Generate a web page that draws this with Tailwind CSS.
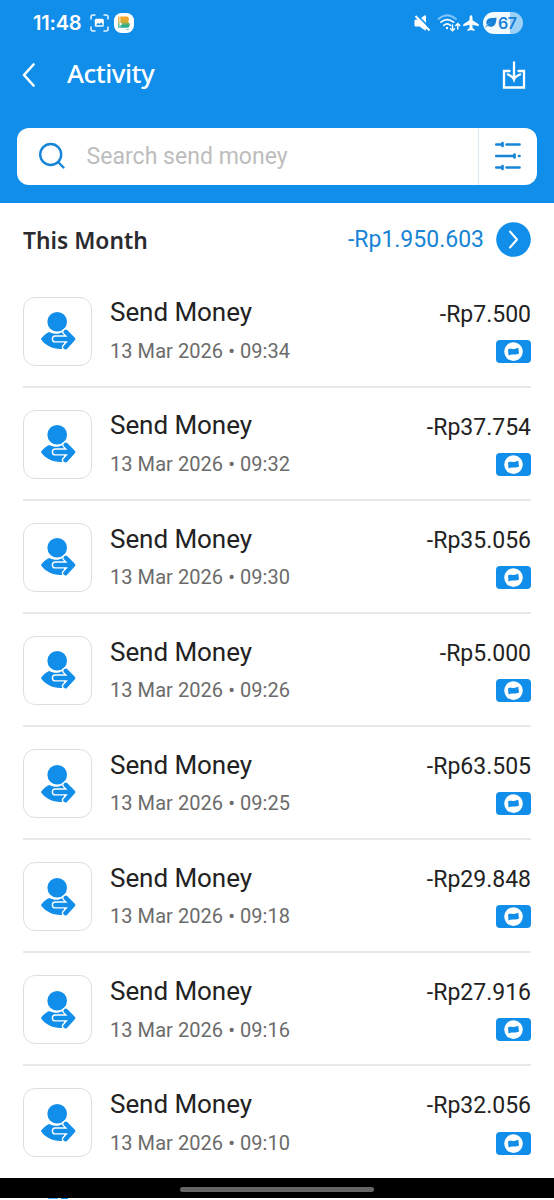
<!DOCTYPE html>
<html lang="en">
<head>
<meta charset="utf-8">
<title>Activity</title>
<script src="https://cdn.jsdelivr.net/npm/@tailwindcss/browser@4"></script>
</head>
<body class="bg-white">
<svg class="hidden">
  <symbol id="send" viewBox="0 0 36 40">
    <circle cx="17.200" cy="10.700" r="9.800" fill="#118eea"/>
    <path d="M.9 28C3.600 24.200 6.500 22 9.300 21C12 22.600 15 23 18 22.700C20.500 22.400 22.500 21 24 20V37.700C14 38.800 5.500 35 .9 28Z" fill="#118eea"/>
    <path d="M15.300 27.900H31M25.800 20.800L33 28L25.500 36.200" fill="none" stroke="#fff" stroke-width="7.200" stroke-linecap="round" stroke-linejoin="round"/>
    <path d="M15.300 27.900H32M25.800 20.800L33 28L25.500 36.200" fill="none" stroke="#118eea" stroke-width="4.500" stroke-linecap="round" stroke-linejoin="round"/>
  </symbol>
  <symbol id="wallet" viewBox="0 0 35 23">
    <rect width="35" height="23" rx="4" fill="#118eea"/>
    <circle cx="17.500" cy="11.600" r="9.300" fill="#fff"/>
    <path d="M12 9.400C14.500 8 17 10 22.300 7.700L23 13.600C19 15.600 16.500 13.500 12.500 15.400Z" fill="#118eea"/>
  </symbol>
</svg>
<div class="relative flex h-[1200px] w-[554px] flex-col overflow-hidden bg-white font-['Roboto',sans-serif]">
  <header class="h-[202.5px] shrink-0 bg-[#118eea] text-white">
    <div class="flex h-[45px] items-center pr-[31px] pl-[33px]">
      <span class="font-['Inter',sans-serif] text-[20px] leading-none font-semibold tracking-[-0.2px]">11:48</span>
      <svg class="ml-[9px] h-[18px] w-[19px]" viewBox="0 0 19 18" fill="none" stroke="#e8f6ff" stroke-width="1.500" stroke-linecap="round">
        <path d="M1 5V3Q1 1 3 1H5M14 1H16Q18 1 18 3V5M18 13V15Q18 17 16 17H14M5 17H3Q1 17 1 15V13"/>
        <rect x="4.800" y="4.800" width="9" height="8" rx="1.500" fill="#fff" stroke="none"/>
        <path d="M6 11.200L8 8.800L9.300 10L11.500 8.200L13 11.200Z" fill="#118eea" stroke="none"/>
      </svg>
      <svg class="ml-[5px] size-5" viewBox="0 0 20 20">
        <defs><linearGradient id="bg" x2="0" y2="1"><stop offset=".15" stop-color="#f6a62b"/><stop offset=".5" stop-color="#c4ae3c"/><stop offset=".75" stop-color="#32af83"/><stop offset="1" stop-color="#2ba8a0"/></linearGradient></defs>
        <rect width="20" height="20" rx="7.500" fill="#fff"/>
        <path d="M4.200 3.500H5.500V15H4.200ZM6.300 3.500H13.500Q16.300 5.500 14 8.700Q17.500 11 14.300 14.800H6.300V12.500L8.500 11L6.300 9.500Z" fill="url(#bg)"/>
        <path d="M12 16.500H15" stroke="#66b7bd" stroke-width=".8"/>
      </svg>
      <div class="ml-auto flex items-center">
        <svg class="h-[18px] w-[17px]" viewBox="0 0 17 18"><path d="M.5 6.500Q.5 5.500 2 5.500H5L10.500 1.500Q12 .8 12 2.500V15.500Q12 17 10.500 16L5.500 12.500H2Q.5 12.500 .5 11.500Z" fill="#fff"/><path d="M2.800 .8L17 15.200" stroke="#118eea" stroke-width="1.800"/><path d="M1.500 2L15.500 16.500" stroke="#fff" stroke-width="1.900"/></svg>
        <svg class="ml-[6px] h-[18px] w-[24px]" viewBox="0 0 24 18" fill="none" stroke="#fff" stroke-width="1.700" stroke-linecap="round">
          <path d="M1.500 5Q10 -2.500 19 5" stroke="#7fc3f8"/><path d="M4 8.200Q10 3 16.500 8.200M6.800 11.300Q10.200 8.500 13.500 11.300"/><circle cx="10" cy="14" r="1.200" fill="#fff" stroke="none"/>
          <path d="M15.500 11V16.500M13.500 14.700L15.500 16.700L17.500 14.700M20.800 15V10M18.800 11.500L20.800 9.500L22.800 11.500" stroke-width="1.400"/>
        </svg>
        <svg class="ml-[2px] size-4" viewBox="0 0 16 16"><path d="M8 0Q9.500 .5 9.500 3V5.300L15.700 9.200V11.200L9.500 9.800V13L11.500 14.400V16L8 15L4.500 16V14.400L6.500 13V9.800L.3 11.200V9.200L6.500 5.300V3Q6.500 .5 8 0Z" fill="#fff"/></svg>
        <div class="ml-[4px] flex h-[22px] w-[40px] items-center rounded-full bg-linear-to-r from-[#f1faff] from-67% to-[#9dd0f8] to-67% pl-[2px] text-[#1680d6]">
          <svg class="h-[11px] w-[12px]" viewBox="0 0 12 11"><path d="M11.500 .5Q11.500 9 7 9.700Q4 10 2.700 8.500L6.500 5L1.500 8Q0 2 6 1Q9 1 11.500 .5Z" fill="#1680d6"/><path d="M.5 10L6.500 5" stroke="#1680d6"/></svg>
          <span class="ml-px font-['Inter',sans-serif] text-[16px] leading-none font-semibold tracking-[-0.5px]">67</span>
        </div>
      </div>
    </div>
    <div class="flex h-[60px] items-center pr-[28px] pl-[22px]">
      <svg class="h-[24px] w-[14px]" viewBox="0 0 14 24" fill="none" stroke="#fff" stroke-width="2.600" stroke-linecap="round" stroke-linejoin="round"><path d="M11.500 1.500L2 12L11.500 22.500"/></svg>
      <h1 class="-mt-[4px] ml-[31px] font-['Noto_Sans',sans-serif] text-[26px] leading-none font-medium tracking-[-0.5px]">Activity</h1>
      <svg class="ml-auto h-[28px] w-[24px]" viewBox="0 0 24 28" fill="none" stroke="#fff" stroke-width="2.300"><path d="M7.500 10H2V26.500H22V10H16.500M12 1.500V18M6 13.500Q11 15.500 12 18.500Q13 15.500 18 13.500" stroke-linecap="round"/></svg>
    </div>
    <div class="mx-[17px] mt-[22.5px] flex h-[57.5px] items-center rounded-xl bg-white">
      <svg class="ml-[21px] size-[28px]" viewBox="0 0 28 28" fill="none" stroke="#1784d6" stroke-width="2.400" stroke-linecap="round"><circle cx="12.700" cy="12.500" r="10.500"/><path d="M20 20L25.500 25.500"/></svg>
      <span class="ml-[20.5px] text-[23px] leading-none tracking-[0.03px] text-[#bdbdbd]">Search send money</span>
      <div class="ml-auto flex h-full w-[59px] items-center justify-center border-l-[1.5px] border-[#dcebf0]">
        <svg class="h-[30px] w-[28px]" viewBox="0 0 28 30" fill="none" stroke="#1784d6" stroke-width="2.700" stroke-linecap="round"><path d="M2.300 3.500H8M12.500 3.500H25.500M2.300 15H19M25 15H25.500M2.300 26.500H8M12.500 26.500H25.500M8.500 2V5M20.500 13.500V16.500M8.500 25V28"/></svg>
      </div>
    </div>
  </header>
  <div class="flex h-[72px] shrink-0 items-center pt-[2px] pr-[23px] pl-[23px]">
    <h2 class="mt-[3px] font-['Noto_Sans',sans-serif] text-[22.8px] leading-none font-semibold text-[#2b2b2f]">This Month</h2>
    <span class="-mt-px ml-auto text-[23px] leading-none text-[#1784d6]">-Rp1.950.603</span>
    <svg class="ml-[12px] size-[35px]" viewBox="0 0 35 35"><circle cx="17.500" cy="17.500" r="17.300" fill="#118eea"/><path d="M14 9.500L21 17.500L14 25.500" fill="none" stroke="#fff" stroke-width="2" stroke-linecap="round" stroke-linejoin="round"/></svg>
  </div>
  <main id="list" class="shrink-0 px-[23px]"></main>
  <div class="absolute top-[1178px] left-0 flex h-[20px] w-full items-center justify-center bg-black pt-[3px]">
    <div class="h-[5px] w-[194px] rounded-full bg-[#666]"></div>
  </div>
  <div class="absolute top-[1198px] left-0 flex h-[2px] w-full gap-[3px] bg-white pl-[48px]">
    <div class="h-px w-[10px] bg-[#55aeef]"></div><div class="h-px w-[7px] bg-[#118eea]"></div>
  </div>
</div>
<script>
const rows = [['7.500','09:34'],['37.754','09:32'],['35.056','09:30'],['5.000','09:26'],['63.505','09:25'],['29.848','09:18'],['27.916','09:16'],['32.056','09:10']];
document.getElementById('list').innerHTML = rows.map(([amount, time]) => `
<div class="flex h-[113.1px] border-b-2 border-[#e9e9e9] pt-[22.2px] last:border-white">
  <div class="flex size-[69px] shrink-0 items-center justify-center rounded-[12px] border border-[#dedede]"><svg class="h-[40px] w-[36px]"><use href="#send"/></svg></div>
  <div class="ml-[18px] flex flex-col">
    <span class="mt-[2.700px] text-[26px] leading-[26px] tracking-[-0.05px] text-[#222]">Send Money</span>
    <span class="mt-[15.600px] text-[20px] leading-[20px] tracking-[0.06px] text-[#6b6b6b]">13 Mar 2026 • ${time}</span>
  </div>
  <div class="ml-auto flex flex-col items-end">
    <span class="mt-[6px] text-[23px] leading-[24px] text-[#222]">-Rp${amount}</span>
    <svg class="mt-[13.200px] h-[23px] w-[35px]"><use href="#wallet"/></svg>
  </div>
</div>`).join('');
</script>
</body>
</html>
